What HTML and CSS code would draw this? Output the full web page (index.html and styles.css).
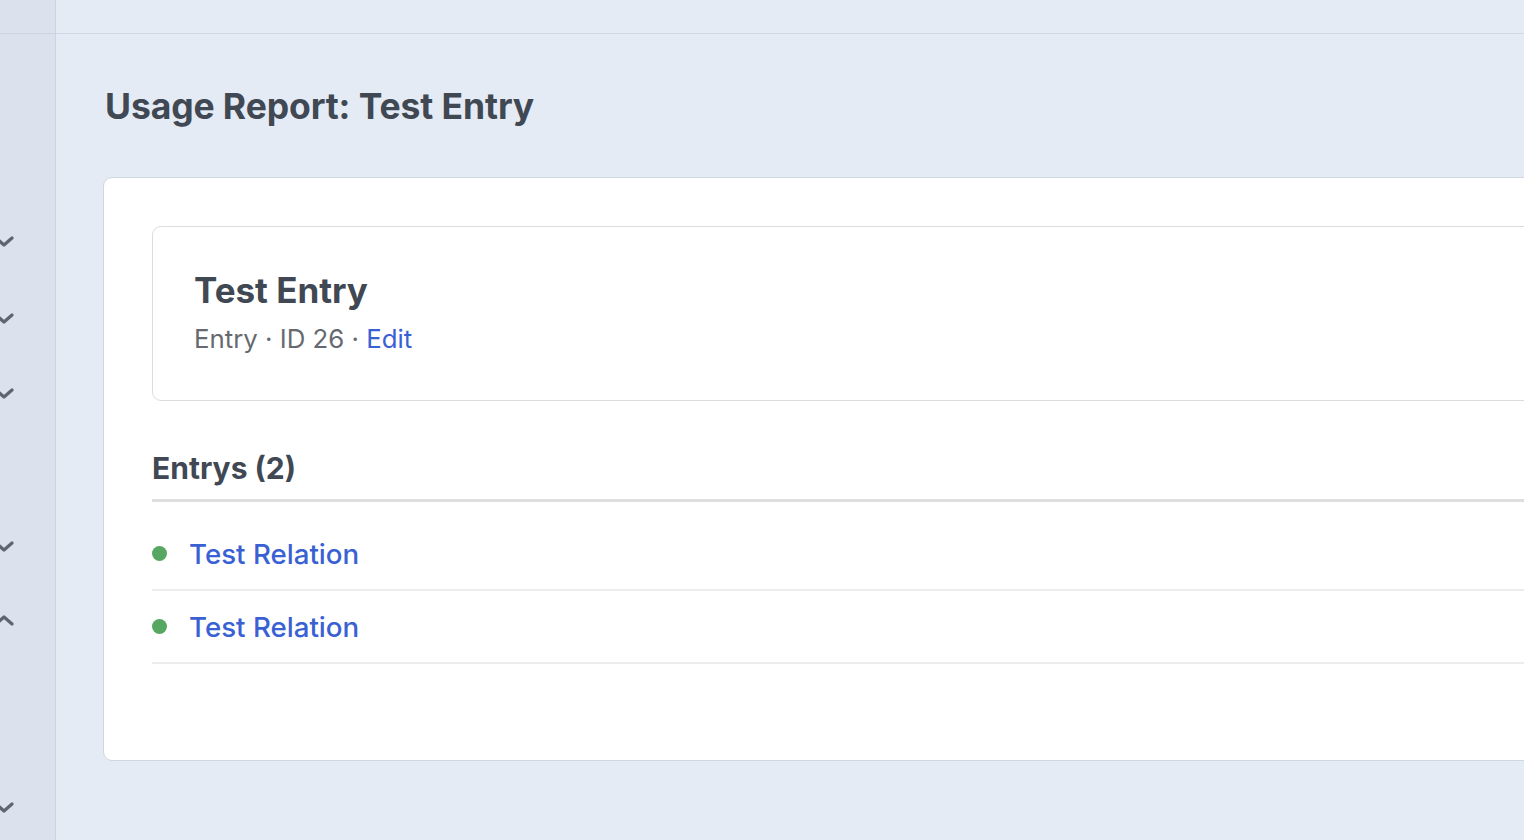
FILE: index.html
```html
<!DOCTYPE html>
<html lang="en">
<head>
<meta charset="utf-8">
<title>Usage Report: Test Entry</title>
<link rel="stylesheet" href="styles.css">
</head>
<body>
<aside class="sidebar">
  <div class="sidebar-top"></div>
  <ul class="nav">
    <li class="nav-item i1"><svg class="chev" viewBox="0 0 20 12"><path d="M2 2 L10 9 L18 2"/></svg></li>
    <li class="nav-item i2"><svg class="chev" viewBox="0 0 20 12"><path d="M2 2 L10 9 L18 2"/></svg></li>
    <li class="nav-item i3"><svg class="chev" viewBox="0 0 20 12"><path d="M2 2 L10 9 L18 2"/></svg></li>
    <li class="nav-item i4"><svg class="chev" viewBox="0 0 20 12"><path d="M2 2 L10 9 L18 2"/></svg></li>
    <li class="nav-item i5"><svg class="chev" viewBox="0 0 20 12"><path d="M2 10 L10 3 L18 10"/></svg></li>
    <li class="nav-item i6"><svg class="chev" viewBox="0 0 20 12"><path d="M2 2 L10 9 L18 2"/></svg></li>
  </ul>
</aside>
<main class="main">
  <header class="topbar"></header>
  <section class="content">
    <h1 class="page-title">Usage Report: Test Entry</h1>
    <div class="card">
      <div class="entry-box">
        <h2 class="entry-title">Test Entry</h2>
        <p class="entry-meta">Entry · ID 26 · <a class="link" href="#">Edit</a></p>
      </div>
      <h3 class="section-title">Entrys (2)</h3>
      <ul class="rel-list">
        <li class="rel-row"><span class="dot"></span><a class="link rel-link" href="#">Test Relation</a></li>
        <li class="rel-row"><span class="dot"></span><a class="link rel-link" href="#">Test Relation</a></li>
      </ul>
    </div>
  </section>
</main>
</body>
</html>
```
FILE: styles.css
```css
* { box-sizing: border-box; }
html, body { margin: 0; padding: 0; height: 100%; }
body {
  display: flex;
  background: #e4ebf5;
  font-family: Inter, "Noto Sans", "Liberation Sans", sans-serif;
  color: #3f4853;
  overflow: hidden;
}
.sidebar {
  width: 56px;
  flex: 0 0 56px;
  background: #dbe2ee;
  border-right: 1px solid #ccd4df;
  height: 840px;
}
.sidebar-top {
  height: 34px;
  border-bottom: 1px solid #cdd4df;
}
.nav { list-style: none; margin: 0; padding: 0; position: relative; height: 806px; }
.nav-item { position: absolute; left: -6px; width: 20px; height: 12px; }
.i1 { top: 202px; }
.i2 { top: 279px; }
.i3 { top: 354px; }
.i4 { top: 507px; }
.i5 { top: 580px; }
.i6 { top: 768px; }
.chev { width: 20px; height: 12px; display: block; }
.chev path { fill: none; stroke: #5d6570; stroke-width: 3.2; stroke-linecap: round; stroke-linejoin: round; }

.main { flex: 1; min-width: 0; }
.topbar {
  height: 34px;
  border-bottom: 1px solid #d1d8e3;
}
.content { padding: 0 0 0 47px; }
.page-title {
  margin: 51px 0 0 2px;
  font-size: 35.5px;
  line-height: 44px;
  font-weight: 700;
  color: #3f4853;
  letter-spacing: -0.1px;
}
.card {
  margin-top: 48px;
  width: 1500px;
  background: #fff;
  border: 1px solid #cfd7e2;
  border-radius: 9px;
  padding: 48px 48px 96px 48px;
}
.entry-box {
  border: 1px solid #dcdcdc;
  border-radius: 9px;
  padding: 41px 41px 44px;
}
.entry-title {
  margin: 0;
  font-size: 35px;
  line-height: 44px;
  font-weight: 700;
  color: #3f4853;
}
.entry-meta {
  margin: 10px 0 0;
  font-size: 25.8px;
  line-height: 34px;
  color: #666a70;
}
.link { color: #3a61d4; text-decoration: none; }
.section-title {
  margin: 48px 0 0;
  font-size: 30px;
  line-height: 38px;
  font-weight: 700;
  color: #3f4853;
  padding-bottom: 12px;
  border-bottom: 3px solid #dedede;
}
.rel-list { list-style: none; margin: 0; padding: 16px 0 0; }
.rel-row {
  display: flex;
  align-items: center;
  gap: 22px;
  height: 73px;
  border-bottom: 2px solid #ededed;
}
.dot { width: 15px; height: 15px; border-radius: 50%; background: #56a762; flex: 0 0 15px; }
.rel-link { font-size: 27.7px; font-weight: 500; }
```
